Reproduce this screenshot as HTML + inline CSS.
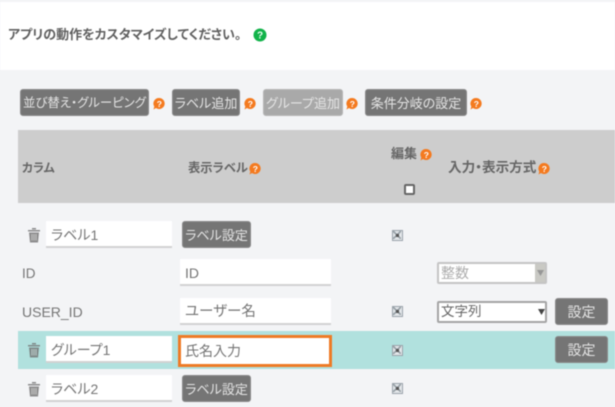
<!DOCTYPE html>
<html lang="ja"><head><meta charset="utf-8"><style>
html,body{margin:0;padding:0}
body{width:615px;height:407px;position:relative;overflow:hidden;background:#f3f4f6;font-family:"Liberation Sans","Noto Sans CJK JP",sans-serif;color:#666;font-feature-settings:"palt"}
#w{left:0;top:0;width:615px;height:407px;filter:blur(.45px)}
div,svg{position:absolute;box-sizing:border-box;white-space:nowrap}
.btn{background:#757575;color:#e4e4e4;border-radius:3px;height:27px;line-height:27px;text-align:center;font-size:13px;border:1px solid #8a8a8a}
.in{background:#fff;border-bottom:2px solid #d2d2d2;height:27px;line-height:29px;font-size:14px;color:#757575;padding-left:5px}
.th{font-weight:bold;font-size:13px;color:#666;line-height:16px}
.cell{font-size:13.5px;color:#757575;line-height:16px}
.q{width:14px;height:14px}
.cb{width:11px;height:11px;background:#e4e7ea;border:1.5px solid #9aa3aa}
.cb::after{content:"";position:absolute;left:0;top:0;width:8px;height:8px;background:linear-gradient(45deg,transparent 42%,#9aa3aa 42%,#9aa3aa 58%,transparent 58%),linear-gradient(-45deg,transparent 42%,#9aa3aa 42%,#9aa3aa 58%,transparent 58%)}
.cb::before{content:"";position:absolute;z-index:2;left:2.5px;top:2.5px;width:3px;height:3px;background:#555}
</style></head><body><div id="w">
<div style="left:0;top:2px;width:615px;height:68px;background:#fff"></div>
<div style="left:8px;top:27px;font-size:13px;font-weight:bold;line-height:16px;color:#606060">アプリの動作をカスタマイズしてください。</div>
<svg style="left:253px;top:28px" width="14" height="14" viewBox="0 0 14 14"><circle cx="7" cy="7" r="6.5" fill="#12b34a"/><text x="7" y="10.5" font-size="10" font-weight="bold" text-anchor="middle" fill="#e8fff0" font-family="Liberation Sans">?</text></svg>

<div class="btn" style="left:20px;top:89px;width:129px;font-size:12.4px">並び替え・グルーピング</div>
<svg class="q" style="left:152px;top:97px" viewBox="0 0 14 14"><path d="M7 1a5.5 5.5 0 1 1-3 10l-2.5 1.5.8-3A5.5 5.5 0 0 1 7 1z" fill="#f47a1f"/><text x="7.3" y="10" font-size="8.5" font-weight="bold" text-anchor="middle" fill="#fff">?</text></svg>
<div class="btn" style="left:172px;top:89px;width:68px">ラベル追加</div>
<svg class="q" style="left:243px;top:97px" viewBox="0 0 14 14"><path d="M7 1a5.5 5.5 0 1 1-3 10l-2.5 1.5.8-3A5.5 5.5 0 0 1 7 1z" fill="#f47a1f"/><text x="7.3" y="10" font-size="8.5" font-weight="bold" text-anchor="middle" fill="#fff">?</text></svg>
<div class="btn" style="left:263px;top:89px;width:80px;background:#a9a9a9;border-color:#b5b5b5">グループ追加</div>
<svg class="q" style="left:345px;top:97px" viewBox="0 0 14 14"><path d="M7 1a5.5 5.5 0 1 1-3 10l-2.5 1.5.8-3A5.5 5.5 0 0 1 7 1z" fill="#f47a1f"/><text x="7.3" y="10" font-size="8.5" font-weight="bold" text-anchor="middle" fill="#fff">?</text></svg>
<div class="btn" style="left:365px;top:89px;width:102px">条件分岐の設定</div>
<svg class="q" style="left:469px;top:97px" viewBox="0 0 14 14"><path d="M7 1a5.5 5.5 0 1 1-3 10l-2.5 1.5.8-3A5.5 5.5 0 0 1 7 1z" fill="#f47a1f"/><text x="7.3" y="10" font-size="8.5" font-weight="bold" text-anchor="middle" fill="#fff">?</text></svg>

<div style="left:18px;top:130px;width:597px;height:73px;background:#cdcdcd"></div>
<div class="th" style="left:22px;top:160px;font-size:12px">カラム</div>
<div class="th" style="left:188px;top:160px;font-size:12.3px">表示ラベル</div>
<svg class="q" style="left:248px;top:162px" viewBox="0 0 14 14"><path d="M7 1a5.5 5.5 0 1 1-3 10l-2.5 1.5.8-3A5.5 5.5 0 0 1 7 1z" fill="#f47a1f"/><text x="7.3" y="10" font-size="8.5" font-weight="bold" text-anchor="middle" fill="#fff">?</text></svg>
<div class="th" style="left:391px;top:146px">編集</div>
<svg class="q" style="left:419px;top:148px" viewBox="0 0 14 14"><path d="M7 1a5.5 5.5 0 1 1-3 10l-2.5 1.5.8-3A5.5 5.5 0 0 1 7 1z" fill="#f47a1f"/><text x="7.3" y="10" font-size="8.5" font-weight="bold" text-anchor="middle" fill="#fff">?</text></svg>
<div class="th" style="left:448px;top:160px;font-size:13.6px">入力・表示方式</div>
<svg class="q" style="left:537px;top:162px" viewBox="0 0 14 14"><path d="M7 1a5.5 5.5 0 1 1-3 10l-2.5 1.5.8-3A5.5 5.5 0 0 1 7 1z" fill="#f47a1f"/><text x="7.3" y="10" font-size="8.5" font-weight="bold" text-anchor="middle" fill="#fff">?</text></svg>
<div style="left:404px;top:184px;width:11px;height:11px;background:#fff;border:2px solid #666;border-radius:2px"></div>

<!-- row 1 -->
<svg style="left:27px;top:227px" width="14" height="16" viewBox="0 0 14 16"><path d="M5 2.5V1h4v1.5M1 3h12v1.5H1zM2 5.5h10l-1 10H3z" fill="#8d8d8d"/><path d="M5 7v6.5M7 7v6.5M9 7v6.5" stroke="#d8d8d8" stroke-width=".8"/></svg>
<div class="in" style="left:46px;top:221px;width:126px">ラベル1</div>
<div class="btn" style="left:182px;top:221px;width:69px">ラベル設定</div>
<div class="cb" style="left:392px;top:230px"></div>

<!-- row 2 -->
<div class="cell" style="left:22px;top:266px">ID</div>
<div class="in" style="left:180px;top:259px;width:151px">ID</div>
<div style="left:437px;top:262px;width:110px;height:22px;background:#fff;border:2px solid #c4c4c4;border-radius:2px;font-size:14px;line-height:18px;color:#adadad;padding-left:2px">整数</div>
<div style="left:535px;top:264px;width:10px;height:18px;background:#c9c9c4"></div>
<svg style="left:537px;top:270px" width="7" height="6"><path d="M0 0h7L3.5 6z" fill="#979797"/></svg>

<!-- row 3 -->
<div class="cell" style="left:22px;top:304px;font-size:14px">USER_ID</div>
<div class="in" style="left:180px;top:298px;width:151px;font-size:14.5px">ユーザー名</div>
<div class="cb" style="left:392px;top:306px"></div>
<div style="left:437px;top:301px;width:110px;height:22px;background:#fff;border:2px solid #a4a4a4;border-radius:2px;font-size:13.5px;line-height:18px;color:#666;padding-left:2px">文字列</div>
<svg style="left:538px;top:309px" width="7" height="6"><path d="M0 0h7L3.5 6z" fill="#444"/></svg>
<div class="btn" style="left:555px;top:298px;width:53px;font-size:14px">設定</div>

<!-- row 4 highlighted -->
<div style="left:18px;top:331px;width:597px;height:38px;background:#b1e1de"></div>
<svg style="left:27px;top:342px" width="14" height="16" viewBox="0 0 14 16"><path d="M5 2.5V1h4v1.5M1 3h12v1.5H1zM2 5.5h10l-1 10H3z" fill="#7f8a89"/><path d="M5 7v6.5M7 7v6.5M9 7v6.5" stroke="#cfdedd" stroke-width=".8"/></svg>
<div class="in" style="left:46px;top:336px;width:126px">グループ1</div>
<div class="in" style="left:178px;top:335px;width:154px;height:32px;border:3px solid #ee7b26;line-height:26px;padding-left:4px">氏名入力</div>
<div class="cb" style="left:392px;top:345px"></div>
<div class="btn" style="left:555px;top:336px;width:53px;font-size:14px">設定</div>

<!-- row 5 -->
<svg style="left:27px;top:381px" width="14" height="16" viewBox="0 0 14 16"><path d="M5 2.5V1h4v1.5M1 3h12v1.5H1zM2 5.5h10l-1 10H3z" fill="#8d8d8d"/><path d="M5 7v6.5M7 7v6.5M9 7v6.5" stroke="#d8d8d8" stroke-width=".8"/></svg>
<div class="in" style="left:46px;top:375px;width:126px">ラベル2</div>
<div class="btn" style="left:182px;top:375px;width:69px">ラベル設定</div>
<div class="cb" style="left:392px;top:383px"></div>
</div></body></html>
